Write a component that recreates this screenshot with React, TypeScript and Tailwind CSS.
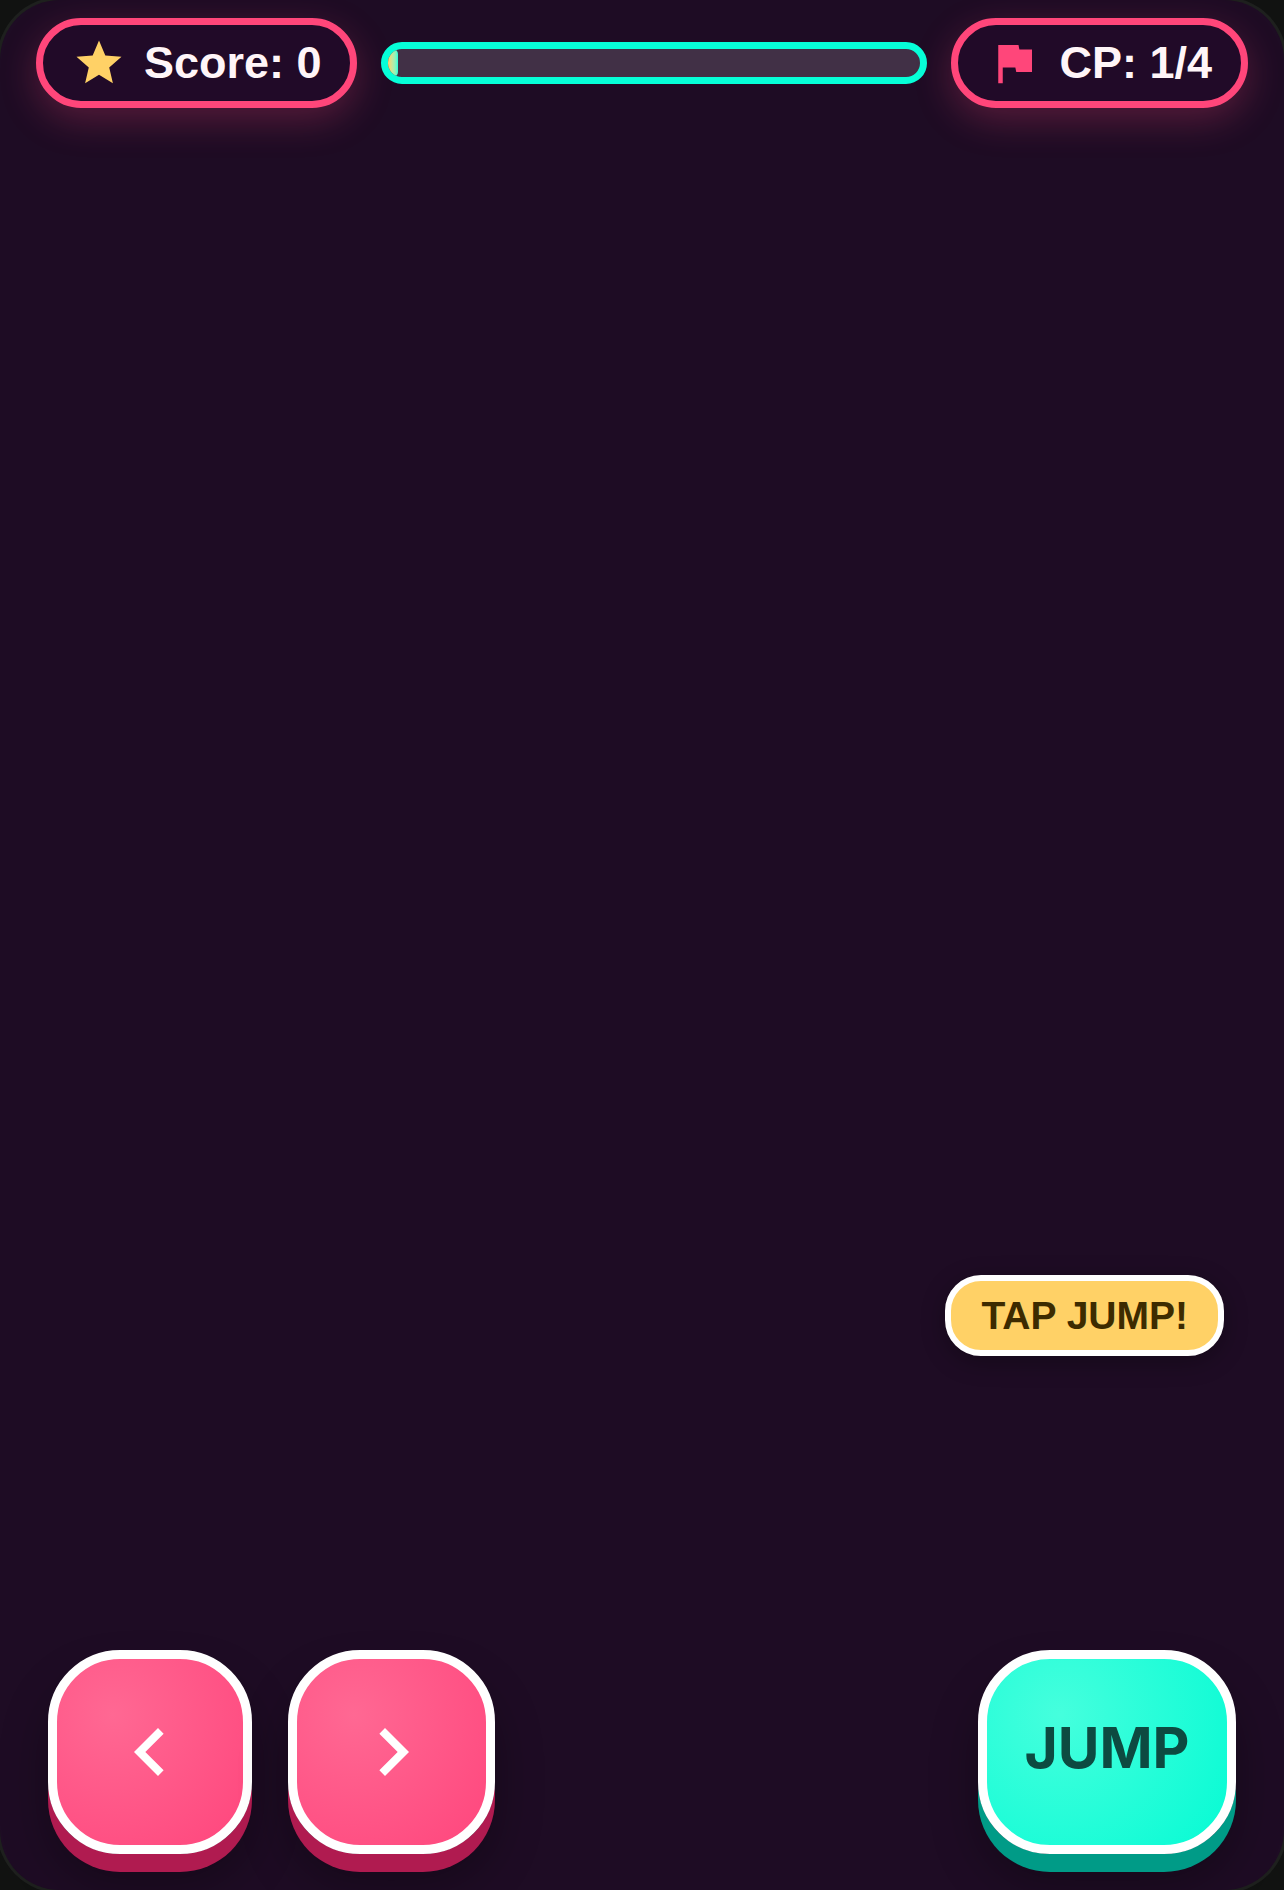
export default function App() {
  return (
    <div className="w-[1284px] h-[1890px] bg-[#111211] overflow-hidden font-['Liberation_Sans',sans-serif]">
      <div className="relative flex flex-col justify-between w-full h-full rounded-[60px] bg-[#1e0c24] shadow-[0_0_0_3px_#1e201e]">
        {/* HUD */}
        <div className="flex items-center gap-6 px-9 pt-[18px]">
          <div className="flex items-center gap-[18px] pl-[29px] pr-[28px] py-[11px] rounded-full border-[7px] border-[#ff467a] bg-[#210a28] shadow-[0_12px_36px_rgba(255,70,122,0.25)]">
            <svg width="54" height="54" viewBox="0 0 24 24" fill="#ffd166" className="shrink-0">
              <path d="M12 17.27L18.18 21l-1.64-7.03L22 9.24l-7.19-.61L12 2 9.19 8.63 2 9.24l5.46 4.73L5.82 21z" />
            </svg>
            <span className="text-[45px] leading-[52px] font-bold text-[#fff5f8] whitespace-nowrap">Score: 0</span>
          </div>

          <div className="flex-1 h-[42px] rounded-full border-[7px] border-[#06ffd8] bg-[#413046] overflow-hidden">
            <div className="w-[2%] h-full rounded-full bg-gradient-to-r from-[#ffd166] to-[#06ffd8]" />
          </div>

          <div className="flex items-center gap-[18px] px-[29px] py-[11px] rounded-full border-[7px] border-[#ff467a] bg-[#210a28] shadow-[0_12px_36px_rgba(255,70,122,0.25)]">
            <svg width="54" height="54" viewBox="0 0 24 24" fill="#ff467a" className="shrink-0">
              <path d="M14.4 6L14 4H5v17h2v-7h5.6l.4 2h7V6z" />
            </svg>
            <span className="text-[45px] leading-[52px] font-bold text-[#fff5f8] whitespace-nowrap">CP: 1/4</span>
          </div>
        </div>

        {/* Hint */}
        <div className="absolute right-[60px] bottom-[534px] px-[30px] py-[12px] rounded-[36px] border-[6px] border-white bg-[#ffd166] text-[39px] leading-[45px] font-bold text-[#3d2b00] whitespace-nowrap shadow-[0_6px_24px_rgba(0,0,0,0.3)]">
          TAP JUMP!
        </div>

        {/* Controls */}
        <div className="flex items-end justify-between px-12 pb-9">
          <div className="flex gap-9">
            <button className="flex items-center justify-center w-[204px] h-[204px] rounded-[72px] border-[9px] border-white bg-[radial-gradient(circle_at_30%_30%,#ff6893,#ff4b80_85%)] shadow-[0_18px_0_#b01b50,0_30px_48px_rgba(0,0,0,0.3)]">
              <svg width="96" height="96" viewBox="0 0 24 24" fill="#ffffff" className="shrink-0">
                <path d="M15.41 7.41L14 6l-6 6 6 6 1.41-1.41L10.83 12z" />
              </svg>
            </button>
            <button className="flex items-center justify-center w-[207px] h-[204px] rounded-[72px] border-[9px] border-white bg-[radial-gradient(circle_at_30%_30%,#ff6893,#ff4b80_85%)] shadow-[0_18px_0_#b01b50,0_30px_48px_rgba(0,0,0,0.3)]">
              <svg width="96" height="96" viewBox="0 0 24 24" fill="#ffffff" className="shrink-0 ml-[3px]">
                <path d="M10 6L8.59 7.41 13.17 12l-4.58 4.59L10 18l6-6z" />
              </svg>
            </button>
          </div>
          <button className="flex items-center justify-center w-[258px] h-[204px] pb-[8px] rounded-[72px] border-[9px] border-white bg-[radial-gradient(circle_at_30%_30%,#45ffdd,#06fbd4)] shadow-[0_18px_0_#009b87,0_30px_48px_rgba(0,0,0,0.3)] font-['Inter',sans-serif] text-[57px] font-bold text-[#0d4a41]">
            JUMP
          </button>
        </div>
      </div>
    </div>
  );
}
